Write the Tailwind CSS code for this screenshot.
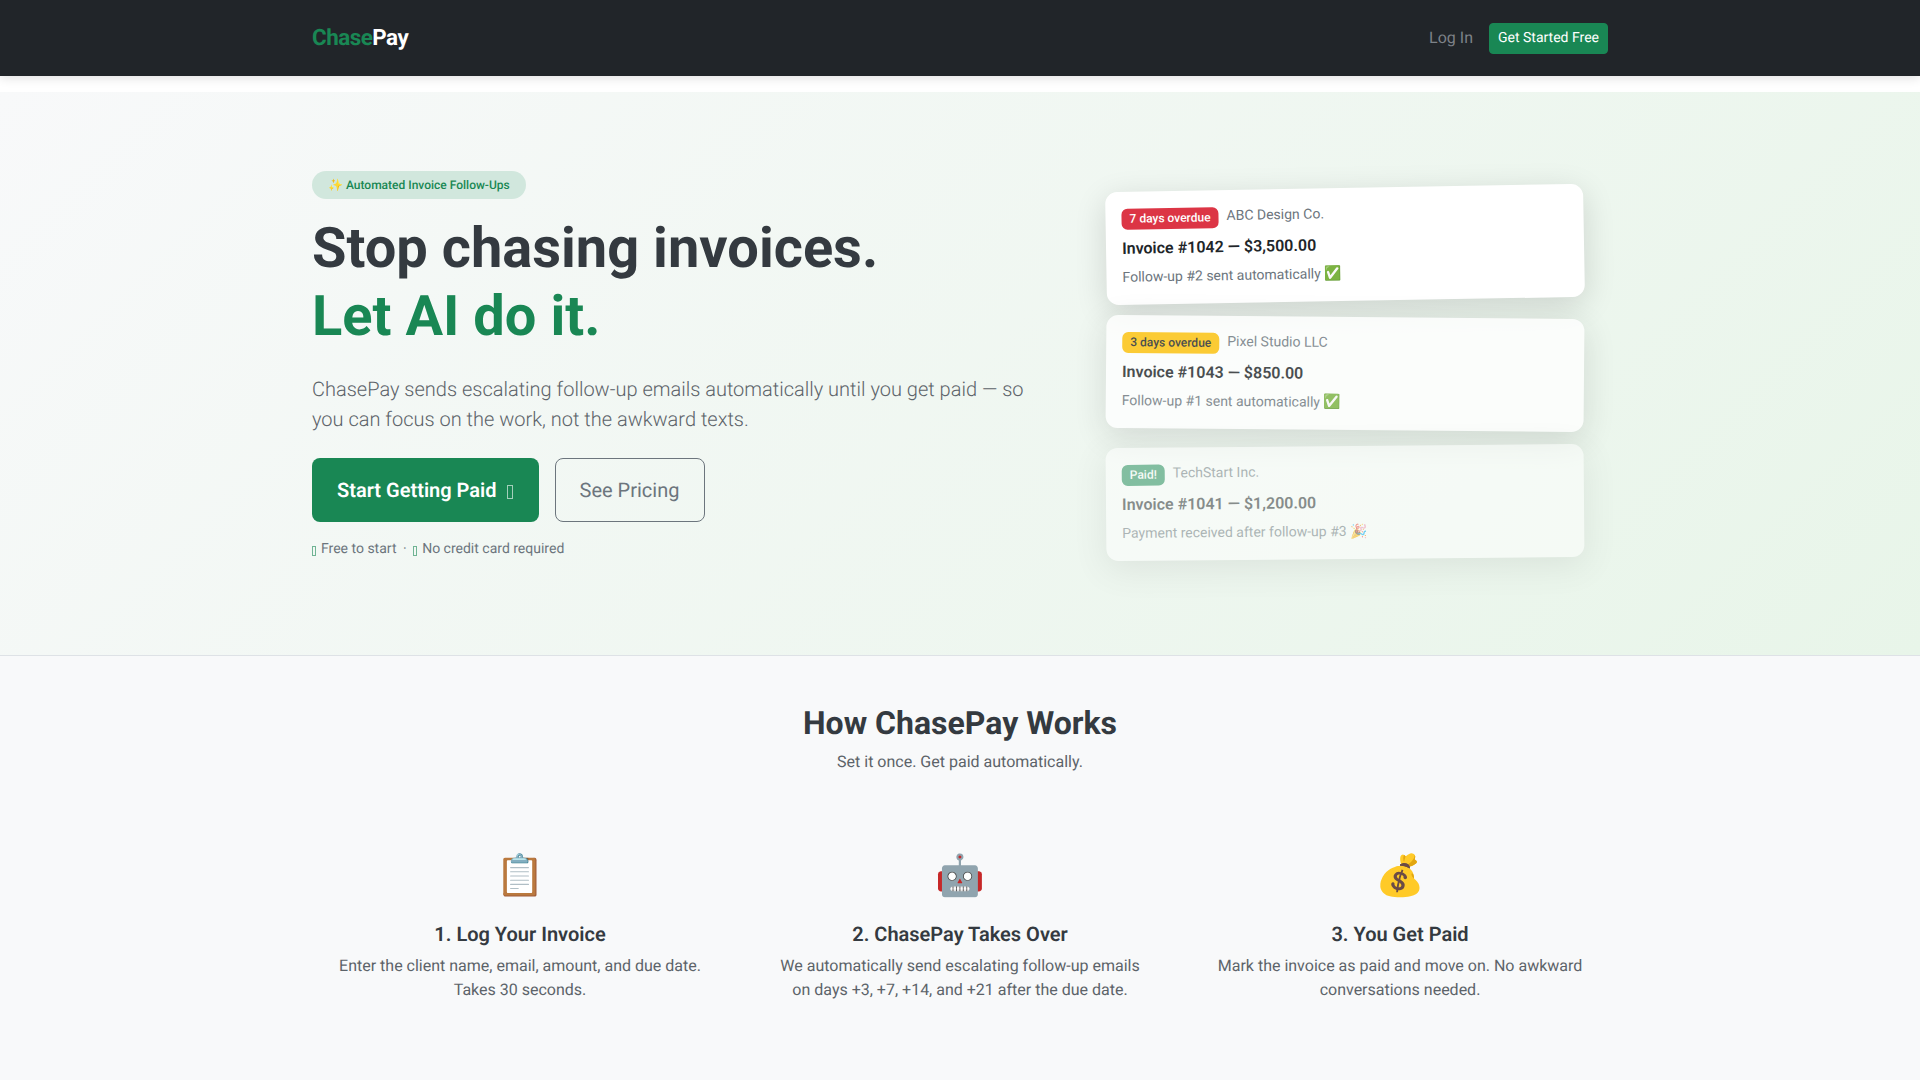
<!DOCTYPE html>
<html lang="en">
<head>
  <meta charset="UTF-8">
  <meta name="viewport" content="width=device-width, initial-scale=1.0">
  <title>ChasePay</title>
  <script src="https://cdn.jsdelivr.net/npm/@tailwindcss/browser@4"></script>
</head>
<body class="bg-white font-['Roboto',sans-serif] [text-rendering:geometricPrecision] text-[16px] leading-[24px] text-[#212529] h-[1080px] overflow-hidden">

  <!-- Navbar -->
  <nav class="h-[76px] bg-[#212529] shadow-[0_2px_10px_rgba(0,0,0,0.12)] relative">
    <div class="w-[1296px] mx-auto h-full flex items-center justify-between">
      <a class="text-[22.4px] font-bold tracking-[-0.5px] leading-[34px] -mt-[1px]"><span class="text-[#198754]">Chase</span><span class="text-white">Pay</span></a>
      <div class="flex items-center">
        <a class="text-[#7d8288] mr-[16px]">Log In</a>
        <a class="bg-[#198754] text-white text-[14px] leading-[21px] px-[8px] py-[4px] rounded-[4px] border border-[#198754]">Get Started Free</a>
      </div>
    </div>
  </nav>

  <div class="h-4 bg-white"></div>

  <!-- Hero -->
  <section class="h-[564px] bg-linear-[135deg,#f8f9fa_0%,#e8f5e9_100%] border-b border-[#dee2e6]">
    <div class="w-[1296px] mx-auto h-full flex">
      <div class="w-[736px] pt-[79px]">
        <span class="inline-flex items-center h-[28px] px-4 rounded-full bg-[#d1e7dd] text-[#198754] text-[12px] font-medium">✨ Automated Invoice Follow-Ups</span>
        <h1 class="text-[56px] leading-[68px] font-bold text-[#343a40] mt-[15px]">Stop chasing invoices.<br><span class="text-[#198754]">Let AI do it.</span></h1>
        <p class="text-[20px] leading-[30px] font-light text-[#5c6369] mt-[24.4px]">ChasePay sends escalating follow-up emails automatically until you get paid — so you can focus on the work, not the awkward texts.</p>
        <div class="flex gap-4 mt-[24px]">
          <a class="h-[64px] flex items-center pl-[25px] pr-[26px] rounded-lg bg-[#198754] text-white text-[20px] font-semibold">Start Getting Paid<span class="inline-block w-[6px] h-[14px] ml-[10px] mt-[3px] border border-white/60"></span></a>
          <a class="h-[64px] w-[150px] flex items-center justify-center rounded-lg border border-[#6c757d] text-[#6c757d] text-[20px]">See Pricing</a>
        </div>
        <p class="flex items-center text-[14px] leading-[21px] text-[#6c757d] mt-[17px]"><span class="w-[4px] h-[10px] mt-[3px] mr-[5px] border border-[#198754]/60"></span>Free to start<span class="mx-[6.5px]">·</span><span class="w-[4px] h-[10px] mt-[3px] mr-[5px] border border-[#198754]/60"></span>No credit card required</p>
      </div>

      <!-- Invoice cards -->
      <div class="w-[560px] pl-[58px] pr-[24px] pt-[96px] flex flex-col gap-[16px]">
        <div class="bg-white rounded-xl p-4 h-[113px] shadow-[0_8px_32px_rgba(0,0,0,0.14)] -rotate-1">
          <div class="flex items-center gap-2 h-[22px] text-[14px] text-[#6c757d]">
            <span class="bg-[#dc3545] text-white text-[12px] font-medium leading-[12px] px-2 py-[4.5px] rounded-[6px]">7 days overdue</span><span class="-mt-[2px]">ABC Design Co.</span>
          </div>
          <div class="font-semibold mt-[7px]">Invoice #1042 — $3,500.00</div>
          <div class="text-[14px] leading-[21px] text-[#6c757d] mt-[7px]">Follow-up #2 sent automatically ✅</div>
        </div>
        <div class="bg-white rounded-xl p-4 h-[113px] shadow-[0_8px_32px_rgba(0,0,0,0.14)] rotate-[0.5deg] opacity-80">
          <div class="flex items-center gap-2 h-[22px] text-[14px] text-[#6c757d]">
            <span class="bg-[#ffc107] text-[#212529] text-[12px] font-medium leading-[12px] px-2 py-[4.5px] rounded-[6px]">3 days overdue</span><span class="-mt-[2px]">Pixel Studio LLC</span>
          </div>
          <div class="font-semibold mt-[7px]">Invoice #1043 — $850.00</div>
          <div class="text-[14px] leading-[21px] text-[#6c757d] mt-[7px]">Follow-up #1 sent automatically ✅</div>
        </div>
        <div class="bg-white rounded-xl p-4 h-[113px] shadow-[0_8px_32px_rgba(0,0,0,0.14)] -rotate-[0.5deg] opacity-50">
          <div class="flex items-center gap-2 h-[22px] text-[14px] text-[#6c757d]">
            <span class="bg-[#198754] text-white text-[12px] font-medium leading-[12px] px-2 py-[4.5px] rounded-[6px]">Paid!</span><span class="-mt-[2px]">TechStart Inc.</span>
          </div>
          <div class="font-semibold mt-[7px]">Invoice #1041 — $1,200.00</div>
          <div class="text-[14px] leading-[21px] text-[#6c757d] mt-[7px]">Payment received after follow-up #3 🎉</div>
        </div>
      </div>
    </div>
  </section>

  <!-- How it works -->
  <section class="bg-[#f8f9fa] h-[424px] pt-[48px]">
    <div class="w-[1296px] mx-auto">
      <h2 class="text-[32px] leading-[38.4px] font-bold text-[#343a40] text-center">How ChasePay Works</h2>
      <p class="text-[#5c6369] text-center mt-[8px]">Set it once. Get paid automatically.</p>
      <div class="grid grid-cols-3 gap-[24px] mt-[72px]">
        <div class="text-center px-6">
          <div class="text-[40px] leading-[60px]">📋</div>
          <h5 class="text-[20px] leading-[24px] font-semibold text-[#343a40] mt-[16px]">1. Log Your Invoice</h5>
          <p class="text-[#5c6369] mt-[8px]">Enter the client name, email, amount, and due date. Takes 30 seconds.</p>
        </div>
        <div class="text-center px-6">
          <div class="text-[40px] leading-[60px]">🤖</div>
          <h5 class="text-[20px] leading-[24px] font-semibold text-[#343a40] mt-[16px]">2. ChasePay Takes Over</h5>
          <p class="text-[#5c6369] mt-[8px]">We automatically send escalating follow-up emails on days +3, +7, +14, and +21 after the due date.</p>
        </div>
        <div class="text-center px-6">
          <div class="text-[40px] leading-[60px]">💰</div>
          <h5 class="text-[20px] leading-[24px] font-semibold text-[#343a40] mt-[16px]">3. You Get Paid</h5>
          <p class="text-[#5c6369] mt-[8px]">Mark the invoice as paid and move on. No awkward conversations needed.</p>
        </div>
      </div>
    </div>
  </section>

</body>
</html>
